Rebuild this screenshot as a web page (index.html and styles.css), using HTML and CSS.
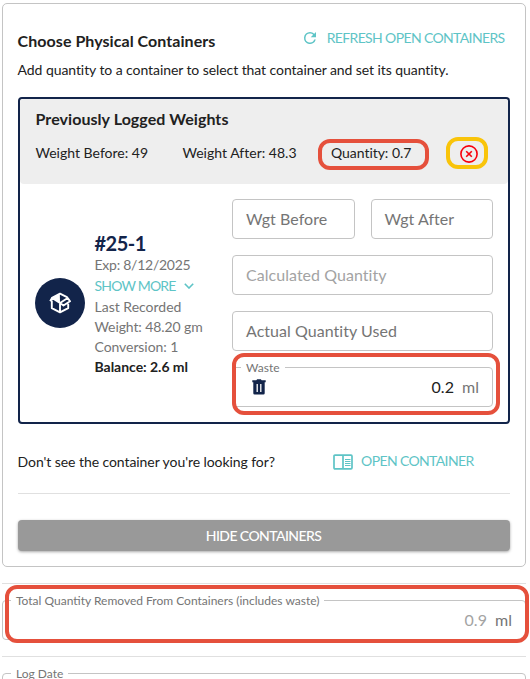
FILE: index.html
```
<!DOCTYPE html>
<html lang="en">
<head>
<meta charset="utf-8">
<title>Choose Physical Containers</title>
<link rel="stylesheet" href="styles.css">
</head>
<body>
<div class="card">
  <div class="card-head">
    <h2>Choose Physical Containers</h2>
    <a class="link refresh">
      <svg width="18" height="18" viewBox="0 0 24 24"><path d="M17.65 6.35A7.96 7.96 0 0 0 12 4a8 8 0 1 0 7.73 10h-2.08A6 6 0 1 1 12 6c1.66 0 3.14.69 4.22 1.78L13 11h7V4z"/></svg>
      <span>REFRESH OPEN CONTAINERS</span>
    </a>
  </div>
  <p class="hint">Add quantity to a container to select that container and set its quantity.</p>

  <div class="container-box">
    <div class="logged">
      <h3>Previously Logged Weights</h3>
      <div class="weights">
        <span class="before">Weight Before: 49</span>
        <span class="after">Weight After: 48.3</span>
        <span class="qty">Quantity: 0.7</span>
        <span class="remove">
          <svg width="18" height="18" viewBox="0 0 18 18"><circle cx="9" cy="9" r="8.1"/><path d="M6.2 6.2l5.6 5.6M11.8 6.2l-5.6 5.6"/></svg>
        </span>
      </div>
    </div>
    <div class="item">
      <div class="avatar">
        <svg width="22" height="22" viewBox="0 0 22 22">
          <path class="line" d="M2.800 8.500v7.700l8.200 4.200 8.200-4.200v-4.500M11 11v9M2.500 6l8.500-4.300 7.500 3.600M11 11l7.700-5 2.300 3.300-6.500 4.200L11 11M1.200 9.200L3 6l8 5"/>
          <path class="solid" d="M10.800 1.700L2.800 6l8.200 5z"/>
        </svg>
      </div>
      <div class="info">
        <div class="num">#25-1</div>
        <div class="exp">Exp: 8/12/2025</div>
        <a class="link more"><span>SHOW MORE</span>
          <svg width="10" height="6" viewBox="0 0 10 6"><path d="M.8.8L5 5 9.200.8"/></svg></a>
        <div class="last">Last Recorded</div>
        <div class="wgt">Weight: 48.20 gm</div>
        <div class="conv">Conversion: 1</div>
        <div class="balance">Balance: 2.6 ml</div>
      </div>
      <div class="fields">
        <div class="pair">
          <div class="field">Wgt Before</div>
          <div class="field">Wgt After</div>
        </div>
        <div class="field disabled">Calculated Quantity</div>
        <div class="field">Actual Quantity Used</div>
        <div class="field waste">
          <span class="label">Waste</span>
          <svg width="14" height="16" viewBox="0 0 14 16"><path d="M.3 1.300h4L5.200.300h3.600l.9 1h4v2H.3zM1.300 3.300h11.400v10.900q0 1.300-1.300 1.300H2.600q-1.300 0-1.300-1.300z"/><path class="bars" d="M5.200 5v8M8.800 5v8"/></svg>
          <span class="value">0.2</span>
          <span class="unit">ml</span>
        </div>
      </div>
    </div>
  </div>

  <div class="open-row">
    <span class="ask">Don't see the container you're looking for?</span>
    <a class="link open">
      <svg width="20" height="16" viewBox="0 0 20 16"><path d="M2 1.200h16q1 0 1 1v11.600q0 1-1 1H2q-1 0-1-1V2.200q0-1 1-1zM10 1v14"/><path class="lines" d="M12 5.500h5.500M12 7.500h5.500M12 9.500h5.500M12 11.500h5.500"/></svg>
      <span>OPEN CONTAINER</span>
    </a>
  </div>
  <button class="hide">HIDE CONTAINERS</button>
</div>

<div class="section">
  <div class="field total">
    <span class="label">Total Quantity Removed From Containers (includes waste)</span>
    <span class="value">0.9</span>
    <span class="unit">ml</span>
  </div>
</div>
<div class="section last-section">
  <div class="field date"><span class="label">Log Date</span></div>
</div>

<!-- highlights -->
<div class="mark mark-qty"></div>
<div class="mark mark-remove"></div>
<div class="mark mark-waste"></div>
<div class="mark mark-total"></div>
</body>
</html>
```
FILE: styles.css
```
* { box-sizing: border-box; }

body {
  position: relative;
  margin: 0;
  padding: 3px 4px 0 2px;
  height: 679px;
  overflow: hidden;
  background: #fff;
  color: #212121;
  font: 14px/20px Lato, "Liberation Sans", sans-serif;
}

h2, h3, p { margin: 0; }
h2, h3 { font-size: 16px; line-height: 24px; font-weight: 700; white-space: nowrap; }
h2 { letter-spacing: .05px; }
h3 { letter-spacing: .06px; }
svg { display: block; flex: none; }

/* card */
.card {
  height: 564px;
  padding: 0 15px;
  border: 1px solid #c4c4c4;
  border-radius: 5px;
}
.card-head {
  display: flex;
  justify-content: space-between;
  padding-top: 25px;
  height: 56px;
}
.card-head h2, .hint, .ask { margin-left: -.4px; }
.link {
  display: flex;
  align-items: center;
  color: #5ec4c6;
  letter-spacing: -.63px;
  white-space: nowrap;
}
.refresh { height: 20px; margin-right: 5.5px; margin-top: -1px; }
.refresh svg { margin-right: 8px; fill: #5ec4c6; }
.hint { height: 37px; letter-spacing: -.075px; white-space: nowrap; }

/* container */
.container-box {
  height: 327px;
  border: 2px solid #12244a;
  border-radius: 4px;
}
.logged {
  height: 85px;
  padding: 8px 0 0 15.5px;
  background: #eee;
  border-radius: 4px;
}
.weights {
  display: flex;
  align-items: center;
  height: 20px;
  margin-top: 12px;
  letter-spacing: .01px;
  white-space: nowrap;
}
.before { width: 147px; }
.after { width: 148.5px; }
.qty { width: 128.5px; letter-spacing: -.04px; }
.remove svg { margin-top: 1px; fill: none; stroke: #f8000c; stroke-width: 1.6; }

.item { display: flex; padding: 15px 15px 0 15px; }
.avatar {
  display: flex;
  align-items: center;
  justify-content: center;
  width: 50px;
  height: 50px;
  margin-top: 79px;
  border-radius: 50%;
  background: #12244a;
}
.avatar .solid { fill: #fff; }
.avatar .line { fill: none; stroke: #fff; stroke-width: 1.9; stroke-linejoin: round; }
.info {
  width: 147px;
  padding: 32px 0 0 9.5px;
  color: #757575;
  white-space: nowrap;
}
.num { color: #12244a; font-size: 20px; line-height: 24px; font-weight: 700; letter-spacing: -.5px; }
.exp { height: 20px; letter-spacing: -.25px; }
.more { height: 22px; padding-bottom: 1px; letter-spacing: -.8px; }
.more svg { margin-left: 8px; fill: none; stroke: #5ec4c6; stroke-width: 1.6; }
.wgt { letter-spacing: -.1px; }
.conv { letter-spacing: -.07px; }
.balance { color: #212121; font-weight: 700; letter-spacing: -.03px; }

/* outlined inputs */
.fields { flex: 1; display: flex; flex-direction: column; gap: 16px; }
.pair { display: flex; gap: 16px; }
.pair .field { flex: 1; }
.field {
  position: relative;
  display: flex;
  align-items: center;
  height: 40px;
  padding: 0 13px;
  border: 1px solid #c4c4c4;
  border-radius: 4px;
  color: #757575;
  font-size: 16px;
  letter-spacing: .04px;
  white-space: nowrap;
}
.disabled { color: #a3a3a3; }
.label {
  position: absolute;
  top: -8px;
  left: 8px;
  padding: 0 5px;
  background: #fff;
  color: #757575;
  font-size: 12px;
  line-height: 16px;
  letter-spacing: 0;
}
.value { margin-left: auto; }
.unit { margin-left: 8px; }
.waste { padding-left: 19px; }
.waste svg { fill: #12244a; }
.waste .bars { stroke: #fff; stroke-width: 1.3; }
.waste .value { color: #212121; }

.open-row {
  display: flex;
  align-items: center;
  height: 70px;
  padding-top: 6px;
  border-bottom: 1px solid #e0e0e0;
  white-space: nowrap;
}
.ask { width: 315.5px; letter-spacing: -.07px; }
.open span { margin-top: -2px; }
.open svg { margin-right: 8px; fill: none; stroke: #5ec4c6; stroke-width: 1.7; }
.open .lines { stroke-width: 1; }
.hide {
  display: block;
  width: 100%;
  height: 31px;
  margin-top: 26px;
  padding: 0 1px 0 0;
  border: 0;
  border-radius: 4px;
  background: #999;
  box-shadow: 0 1px 3px rgba(0,0,0,.35);
  color: #fff;
  font: 500 14px/30px Lato, "Liberation Sans", sans-serif;
  letter-spacing: -.58px;
}

.section { height: 73px; padding-top: 16px; border-top: 1px solid #e0e0e0; }
.card + .section { margin-top: 16px; }
.last-section { height: 23px; }
.total .value { color: #a3a3a3; }

/* highlight frames */
.mark { position: absolute; border: 4px solid #e5503c; border-radius: 12px; }
.mark-qty { left: 318px; top: 139px; width: 111px; height: 31px; }
.mark-remove { left: 446px; top: 137px; width: 42px; height: 32px; border-color: #f9c40a; }
.mark-waste { left: 232px; top: 353px; width: 268px; height: 62px; }
.mark-total { left: 5px; top: 585px; width: 524px; height: 58px; }
```
